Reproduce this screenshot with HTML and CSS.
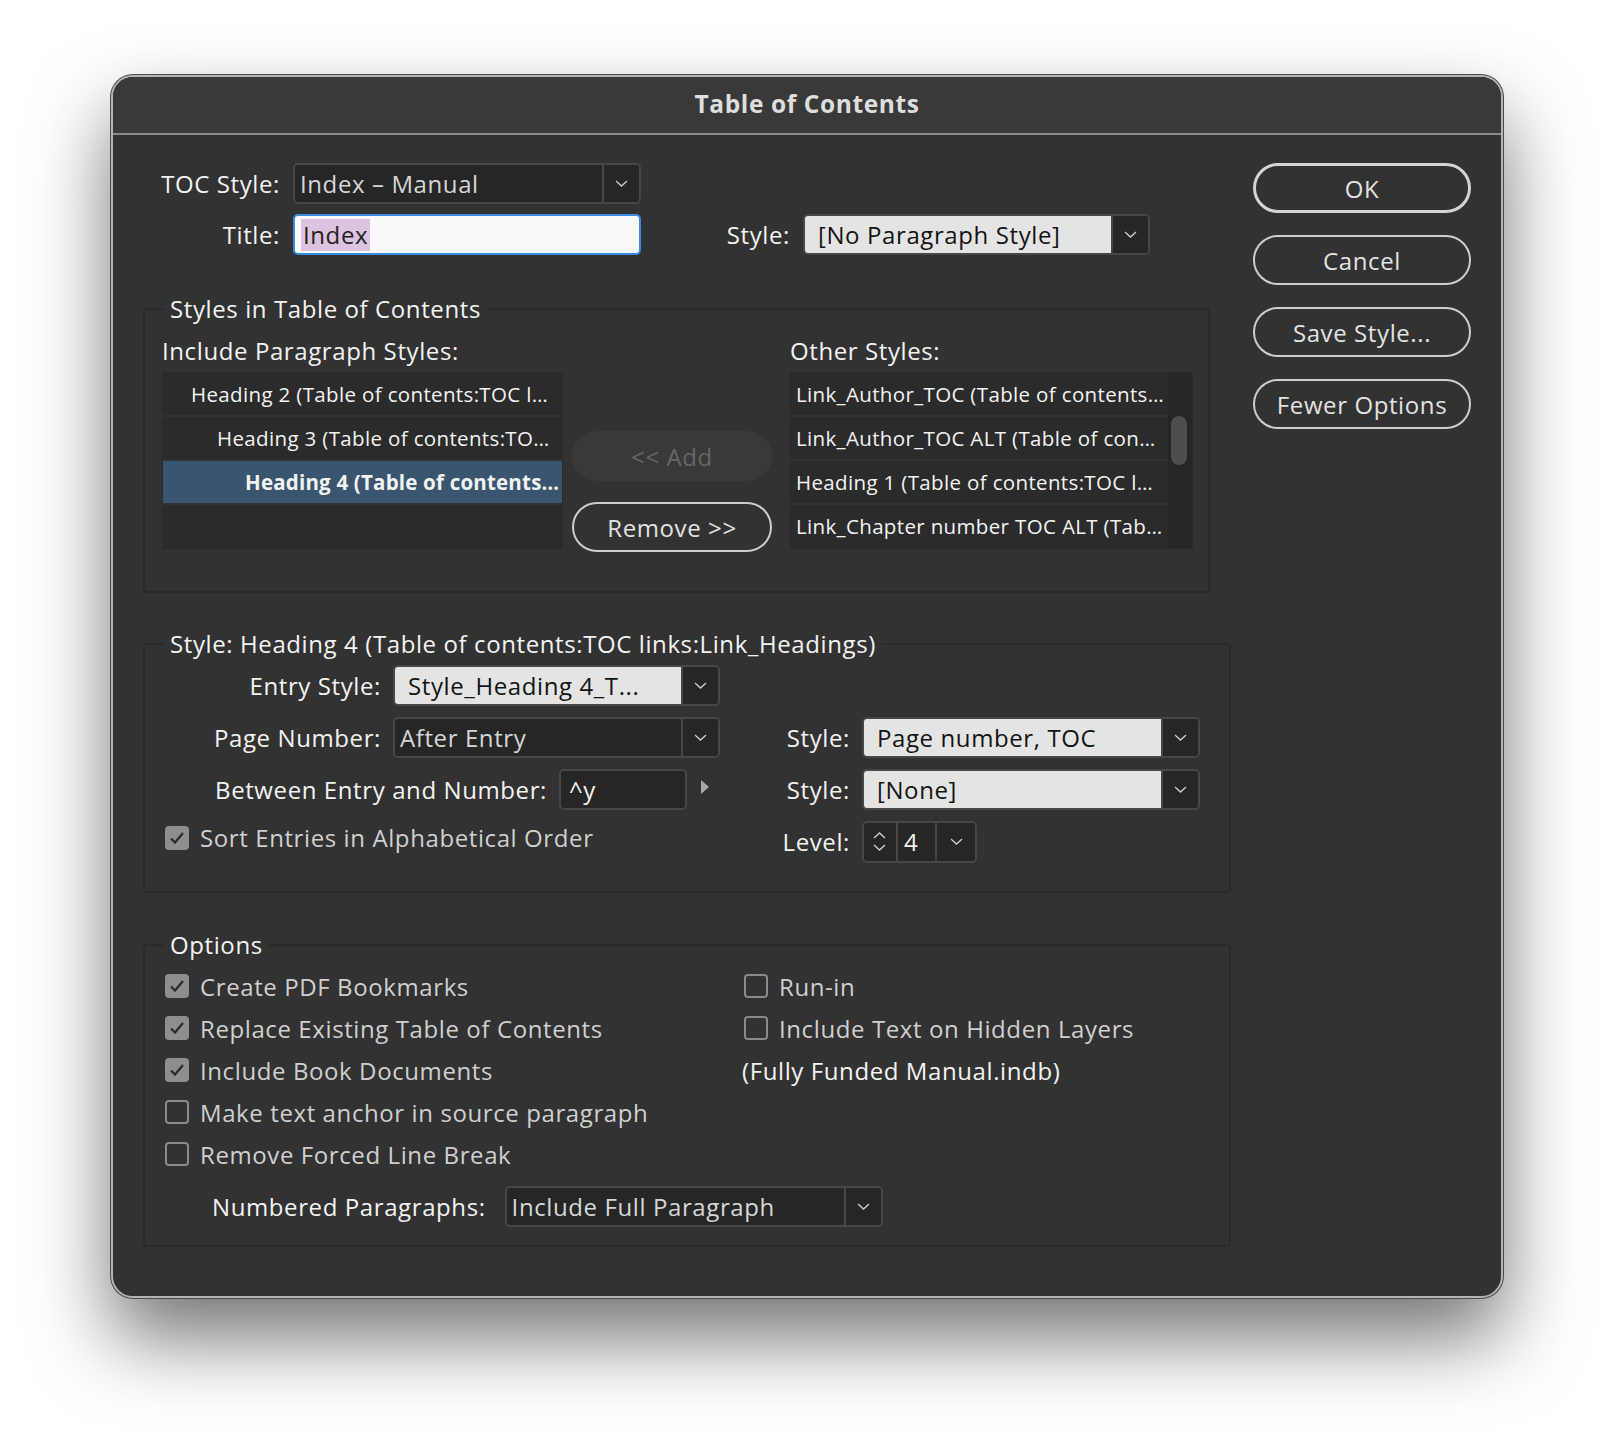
FILE: index.html
```html
<!DOCTYPE html>
<html lang="en">
<head>
    <meta charset="UTF-8">
    <meta name="viewport" content="width=device-width, initial-scale=1.0">
    <title>Table of Contents</title>
    <link rel="stylesheet" href="styles.css">
</head>
<body>
    <div class="dialog">
        <div class="titlebar">Table of Contents</div>

        <div class="dialog-body">
            <div class="main">
                <!-- top rows -->
                <div class="row">
                    <span class="lbl lbl-top">TOC Style:</span>
                    <div class="select select-toc">
                        <span class="select-value">Index – Manual</span>
                        <span class="select-arrow"><svg width="13" height="7" viewBox="0 0 13 7"><path d="M1 1l5.5 5 5.5-5" fill="none" stroke="#cfcfcf" stroke-width="1.3"/></svg></span>
                    </div>
                </div>
                <div class="row row-title">
                    <span class="lbl lbl-top">Title:</span>
                    <div class="text-input"><span class="selected-text">Index</span></div>
                    <span class="lbl lbl-style">Style:</span>
                    <div class="select select-light select-para">
                        <span class="select-value">[No Paragraph Style]</span>
                        <span class="select-arrow"><svg width="13" height="7" viewBox="0 0 13 7"><path d="M1 1l5.5 5 5.5-5" fill="none" stroke="#cfcfcf" stroke-width="1.3"/></svg></span>
                    </div>
                </div>

                <!-- styles in toc -->
                <fieldset class="group group-styles">
                    <legend>Styles in Table of Contents</legend>
                    <div class="styles-row">
                        <div class="list-col list-col-left">
                            <div class="list-head">Include Paragraph Styles:</div>
                            <div class="list">
                                <div class="list-item indent-1">Heading 2 (Table of contents:TOC l…</div>
                                <div class="list-item indent-2">Heading 3 (Table of contents:TO…</div>
                                <div class="list-item indent-3 selected">Heading 4 (Table of contents…</div>
                                <div class="list-item"></div>
                            </div>
                        </div>
                        <div class="move-col">
                            <button class="btn btn-disabled">&lt;&lt; Add</button>
                            <button class="btn">Remove &gt;&gt;</button>
                        </div>
                        <div class="list-col list-col-right">
                            <div class="list-head">Other Styles:</div>
                            <div class="list list-scroll">
                                <div class="list-items">
                                    <div class="list-item">Link_Author_TOC (Table of contents…</div>
                                    <div class="list-item">Link_Author_TOC ALT (Table of con…</div>
                                    <div class="list-item">Heading 1 (Table of contents:TOC l…</div>
                                    <div class="list-item">Link_Chapter number TOC ALT (Tab…</div>
                                </div>
                                <div class="scrollbar"><div class="thumb"></div></div>
                            </div>
                        </div>
                    </div>
                </fieldset>

                <!-- selected style -->
                <fieldset class="group group-entry">
                    <legend>Style: Heading 4 (Table of contents:TOC links:Link_Headings)</legend>
                    <div class="entry-grid">
                        <div class="field">
                            <span class="lbl lbl-entry">Entry Style:</span>
                            <div class="select select-light select-entry">
                                <span class="select-value">Style_Heading 4_T...</span>
                                <span class="select-arrow"><svg width="13" height="7" viewBox="0 0 13 7"><path d="M1 1l5.5 5 5.5-5" fill="none" stroke="#cfcfcf" stroke-width="1.3"/></svg></span>
                            </div>
                        </div>
                        <div></div>

                        <div class="field">
                            <span class="lbl lbl-entry">Page Number:</span>
                            <div class="select select-entry">
                                <span class="select-value">After Entry</span>
                                <span class="select-arrow"><svg width="13" height="7" viewBox="0 0 13 7"><path d="M1 1l5.5 5 5.5-5" fill="none" stroke="#cfcfcf" stroke-width="1.3"/></svg></span>
                            </div>
                        </div>
                        <div class="field">
                            <span class="lbl lbl-right">Style:</span>
                            <div class="select select-light select-right">
                                <span class="select-value">Page number, TOC</span>
                                <span class="select-arrow"><svg width="13" height="7" viewBox="0 0 13 7"><path d="M1 1l5.5 5 5.5-5" fill="none" stroke="#cfcfcf" stroke-width="1.3"/></svg></span>
                            </div>
                        </div>

                        <div class="field">
                            <span class="lbl lbl-between">Between Entry and Number:</span>
                            <div class="text-input dark-input">^y</div>
                            <svg class="flyout" width="10" height="16" viewBox="0 0 10 16"><path d="M1 1l8 7-8 7z" fill="#a9a9a9"/></svg>
                        </div>
                        <div class="field">
                            <span class="lbl lbl-right">Style:</span>
                            <div class="select select-light select-right">
                                <span class="select-value">[None]</span>
                                <span class="select-arrow"><svg width="13" height="7" viewBox="0 0 13 7"><path d="M1 1l5.5 5 5.5-5" fill="none" stroke="#cfcfcf" stroke-width="1.3"/></svg></span>
                            </div>
                        </div>

                        <div class="check-row sort-row">
                            <span class="checkbox checked"><svg width="16" height="14" viewBox="0 0 16 14"><path d="M2 7.5l4 4 8-9.5" fill="none" stroke="#2b2b2b" stroke-width="2.2"/></svg></span>
                            <span>Sort Entries in Alphabetical Order</span>
                        </div>
                        <div class="field">
                            <span class="lbl lbl-right">Level:</span>
                            <div class="spinner">
                                <span class="spin-arrows">
                                    <svg width="13" height="7" viewBox="0 0 13 7"><path d="M1 6l5.5-5 5.5 5" fill="none" stroke="#cfcfcf" stroke-width="1.3"/></svg>
                                    <svg width="13" height="7" viewBox="0 0 13 7"><path d="M1 1l5.5 5 5.5-5" fill="none" stroke="#cfcfcf" stroke-width="1.3"/></svg>
                                </span>
                                <span class="spin-value">4</span>
                                <span class="select-arrow"><svg width="13" height="7" viewBox="0 0 13 7"><path d="M1 1l5.5 5 5.5-5" fill="none" stroke="#cfcfcf" stroke-width="1.3"/></svg></span>
                            </div>
                        </div>
                    </div>
                </fieldset>

                <!-- options -->
                <fieldset class="group group-options">
                    <legend>Options</legend>
                    <div class="options-grid">
                        <div class="check-row">
                            <span class="checkbox checked"><svg width="16" height="14" viewBox="0 0 16 14"><path d="M2 7.5l4 4 8-9.5" fill="none" stroke="#2b2b2b" stroke-width="2.2"/></svg></span>
                            <span>Create PDF Bookmarks</span>
                        </div>
                        <div class="check-row">
                            <span class="checkbox"></span>
                            <span>Run-in</span>
                        </div>
                        <div class="check-row">
                            <span class="checkbox checked"><svg width="16" height="14" viewBox="0 0 16 14"><path d="M2 7.5l4 4 8-9.5" fill="none" stroke="#2b2b2b" stroke-width="2.2"/></svg></span>
                            <span>Replace Existing Table of Contents</span>
                        </div>
                        <div class="check-row">
                            <span class="checkbox"></span>
                            <span>Include Text on Hidden Layers</span>
                        </div>
                        <div class="check-row">
                            <span class="checkbox checked"><svg width="16" height="14" viewBox="0 0 16 14"><path d="M2 7.5l4 4 8-9.5" fill="none" stroke="#2b2b2b" stroke-width="2.2"/></svg></span>
                            <span>Include Book Documents</span>
                        </div>
                        <div class="book-name">(Fully Funded Manual.indb)</div>
                        <div class="check-row">
                            <span class="checkbox"></span>
                            <span>Make text anchor in source paragraph</span>
                        </div>
                        <div></div>
                        <div class="check-row">
                            <span class="checkbox"></span>
                            <span>Remove Forced Line Break</span>
                        </div>
                        <div></div>
                    </div>
                    <div class="row numbered-row">
                        <span class="lbl">Numbered Paragraphs:</span>
                        <div class="select select-numbered">
                            <span class="select-value">Include Full Paragraph</span>
                            <span class="select-arrow"><svg width="13" height="7" viewBox="0 0 13 7"><path d="M1 1l5.5 5 5.5-5" fill="none" stroke="#cfcfcf" stroke-width="1.3"/></svg></span>
                        </div>
                    </div>
                </fieldset>
            </div>

            <div class="buttons">
                <button class="btn btn-default">OK</button>
                <button class="btn">Cancel</button>
                <button class="btn">Save Style...</button>
                <button class="btn">Fewer Options</button>
            </div>
        </div>
    </div>
</body>
</html>
```

FILE: styles.css
```css
body {
    margin: 0;
    padding: 75px 0 0 111px;
    min-height: 1444px;
    box-sizing: border-box;
    background-color: #ffffff;
    font-family: "Open Sans", "Noto Sans", sans-serif;
    font-size: 24px;
    letter-spacing: 0.6px;
    color: #f2f2f2;
}

.dialog {
    width: 1392px;
    box-sizing: border-box;
    background-color: #323232;
    border: 2px solid #b4b4b4;
    border-radius: 22px;
    box-shadow: 0 0 0 1px #4a4a4a, 0 40px 80px rgba(0, 0, 0, 0.55);
    overflow: hidden;
}

.titlebar {
    height: 56px;
    line-height: 54px;
    text-align: center;
    background-color: #393939;
    border-bottom: 2px solid #8a8a8a;
    font-weight: bold;
    font-size: 24.5px;
    color: #dedede;
}

.dialog-body {
    display: flex;
    gap: 22px;
    padding: 28px 30px 49px 30px;
}

.main {
    width: 1088px;
}

.row {
    display: flex;
    align-items: center;
    height: 41px;
}

.row-title {
    margin-top: 10px;
}

.lbl {
    white-space: nowrap;
    text-align: right;
    box-sizing: border-box;
}

.lbl-top {
    width: 150px;
    padding-right: 13px;
}

.lbl-style {
    width: 162px;
    padding-right: 13px;
}

/* dropdowns */
.select {
    display: flex;
    height: 41px;
    box-sizing: border-box;
    border: 2px solid #474747;
    border-radius: 5px;
    background-color: #262626;
    overflow: hidden;
}

.select-value {
    flex: 1;
    padding-left: 5px;
    line-height: 37px;
    color: #d6d6d6;
    white-space: nowrap;
    overflow: hidden;
}

.select-light .select-value {
    background-color: #e4e4e4;
    color: #141414;
    padding-left: 13px;
}

.select-arrow {
    width: 35px;
    flex-shrink: 0;
    display: flex;
    align-items: center;
    justify-content: center;
    border-left: 2px solid #474747;
    background-color: #262626;
}

.select-toc { width: 348px; }
.select-para { width: 347px; }
.select-entry { width: 327px; }
.select-right { width: 338px; }
.select-numbered { width: 378px; }

.text-input {
    width: 348px;
    height: 41px;
    box-sizing: border-box;
    border: 2px solid #3b8be0;
    border-radius: 5px;
    background-color: #fafafa;
    padding-left: 6px;
    display: flex;
    align-items: center;
    color: #222;
}

.selected-text {
    background-color: #dcc4e0;
    line-height: 32px;
    padding: 0 2px;
}

.dark-input {
    width: 128px;
    border-color: #474747;
    background-color: #262626;
    color: #f2f2f2;
    padding-left: 8px;
}

.flyout {
    margin-left: 13px;
    margin-top: -6px;
}

/* groups */
.group {
    margin: 0;
    padding: 0 15px 0 17px;
    border: 2px solid #2a2a2a;
    border-radius: 4px;
    min-width: 0;
}

.group legend {
    padding: 0 6px;
    margin-left: 2px;
    line-height: 30px;
}

.group-styles {
    width: 1067px;
    box-sizing: border-box;
    margin-top: 39px;
    padding-top: 12px;
    padding-bottom: 42px;
}

.styles-row {
    display: flex;
}

.list-col-left {
    width: 401px;
}

.list-col-right {
    width: 403px;
    margin-left: 18px;
}

.list-head {
    line-height: 30px;
    margin-bottom: 6px;
    white-space: nowrap;
}

.list {
    height: 177px;
    box-sizing: border-box;
    border: 1px solid #2a2a2a;
    background-color: #2b2b2b;
    font-size: 20.5px;
    letter-spacing: 0.35px;
}

.list-item {
    height: 44px;
    line-height: 42px;
    border-bottom: 2px solid #333333;
    box-sizing: border-box;
    white-space: nowrap;
    overflow: hidden;
    padding-left: 5px;
}

.list-item:last-child {
    border-bottom: none;
}

.indent-1 { padding-left: 28px; }
.indent-2 { padding-left: 54px; }
.indent-3 { padding-left: 82px; }

.list-item.selected {
    background-color: #3a5570;
    font-weight: bold;
    letter-spacing: 0.2px;
}

.list-scroll {
    display: flex;
}

.list-items {
    flex: 1;
    min-width: 0;
}

.scrollbar {
    width: 24px;
    background-color: #262626;
    padding-top: 43px;
    box-sizing: border-box;
}

.thumb {
    width: 16px;
    height: 49px;
    margin-left: 3px;
    border-radius: 8px;
    background-color: #4e4e4e;
}

.move-col {
    width: 200px;
    margin-left: 9px;
    display: flex;
    flex-direction: column;
    justify-content: flex-end;
    gap: 21px;
    margin-bottom: -3px;
}

/* buttons */
.btn {
    height: 50px;
    box-sizing: border-box;
    border: 2px solid #cdcdcd;
    border-radius: 25px;
    background-color: transparent;
    color: #e2e2e2;
    font-family: inherit;
    font-size: 24px;
    letter-spacing: 0.6px;
    padding: 0;
}

.btn-disabled {
    border-color: #393939;
    background-color: #393939;
    color: #666666;
}

.btn-default {
    border-width: 3px;
    border-color: #d4d4d4;
}

.buttons {
    width: 218px;
    display: flex;
    flex-direction: column;
    gap: 22px;
}

/* entry style group */
.group-entry {
    width: 1088px;
    box-sizing: border-box;
    margin-top: 36px;
    padding-top: 6px;
    padding-bottom: 29px;
}

.entry-grid {
    display: grid;
    grid-template-columns: 598px 1fr;
    grid-auto-rows: 41px;
    row-gap: 11px;
}

.field {
    display: flex;
    align-items: center;
}

.lbl-entry {
    width: 231px;
    padding-right: 12px;
}

.lbl-between {
    width: 397px;
    padding-right: 12px;
}

.lbl-right {
    width: 102px;
    padding-right: 12px;
}

.check-row {
    display: flex;
    align-items: center;
    gap: 11px;
    color: #cfcfcf;
    white-space: nowrap;
}

.sort-row {
    padding-left: 3px;
    margin-top: -8px;
}

.checkbox {
    width: 24px;
    height: 24px;
    box-sizing: border-box;
    border: 2px solid #8a8a8a;
    border-radius: 4px;
    display: flex;
    align-items: center;
    justify-content: center;
    flex-shrink: 0;
}

.checkbox.checked {
    background-color: #8e8e8e;
    border-color: #8e8e8e;
}

.spinner {
    display: flex;
    width: 115px;
    height: 42px;
    box-sizing: border-box;
    border: 2px solid #474747;
    border-radius: 5px;
    background-color: #262626;
    overflow: hidden;
}

.spin-arrows {
    width: 34px;
    display: flex;
    flex-direction: column;
    align-items: center;
    justify-content: center;
    gap: 5px;
    border-right: 2px solid #474747;
}

.spin-value {
    width: 39px;
    padding-left: 6px;
    line-height: 38px;
    box-sizing: border-box;
}

.spinner .select-arrow {
    width: 38px;
}

/* options group */
.group-options {
    width: 1088px;
    box-sizing: border-box;
    margin-top: 37px;
    padding-top: 5px;
    padding-bottom: 18px;
}

.options-grid {
    display: grid;
    grid-template-columns: 579px 1fr;
    grid-auto-rows: 42px;
    padding-left: 3px;
}

.book-name {
    display: flex;
    align-items: center;
    margin-left: -2px;
    white-space: nowrap;
}

.numbered-row {
    margin-top: 11px;
    padding-left: 50px;
}

.numbered-row .lbl {
    padding-right: 19px;
}
```
